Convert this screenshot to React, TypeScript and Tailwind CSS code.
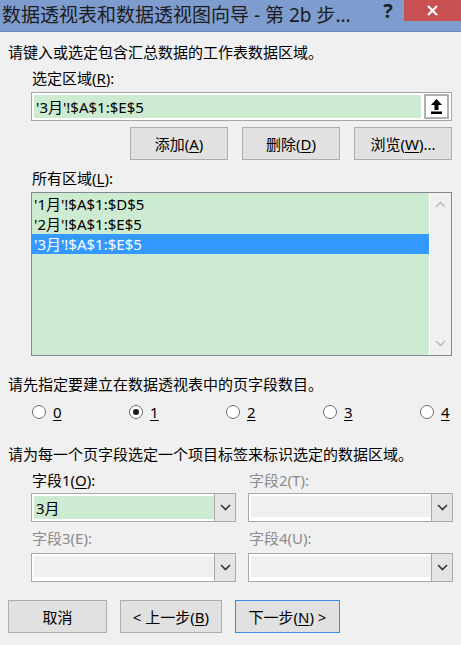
import React from 'react';

const font = "font-['Segoe_UI','Noto_Sans','Noto_Sans_CJK_SC',sans-serif]";

const Chevron = ({ color = '#333', up = false }: { color?: string; up?: boolean }) => (
  <svg width="11" height="7" viewBox="0 0 11 7">
    <path d={up ? 'M1 6 L5.5 1.5 L10 6' : 'M1 1 L5.5 5.5 L10 1'} fill="none" stroke={color} strokeWidth="1.6" />
  </svg>
);

const Btn = ({ children, w, primary = false }: { children: React.ReactNode; w: string; primary?: boolean }) => (
  <button
    className={`${w} h-[33px] flex items-center justify-center bg-[#e1e1e1] border text-[15px] leading-5 text-black ${
      primary ? 'border-[#3c8be6]' : 'border-[#adadad]'
    }`}
  >
    {children}
  </button>
);

const U = ({ children }: { children: React.ReactNode }) => <span className="underline underline-offset-2">{children}</span>;

const Combo = ({ value, active = false }: { value?: string; active?: boolean }) => (
  <div className="w-[205px] h-[29px] flex border border-[#a9a9a9] bg-white p-[2px]">
    <div className={`flex-1 flex items-center pl-[2px] text-[15px] ${active ? 'bg-[#cdebd0]' : 'bg-[#f0f0f0] border-b-2 border-white'}`}>
      {value}
    </div>
    <div className="w-[21px] -my-[2px] -mr-[2px] flex items-center justify-center bg-[#e5e5e5] border-l border-[#a9a9a9]">
      <Chevron />
    </div>
  </div>
);

const Radio = ({ label, checked = false, last = false }: { label: string; checked?: boolean; last?: boolean }) => (
  <div className={`${last ? '' : 'w-[97px]'} shrink-0 flex items-center gap-[7px]`}>
    <span className="w-[14px] h-[14px] rounded-full border border-[#6e6e6e] bg-white flex items-center justify-center">
      {checked && <span className="w-[6px] h-[6px] rounded-full bg-[#1a1a1a]" />}
    </span>
    <U>{label}</U>
  </div>
);

export default function App() {
  return (
    <div className={`w-[461px] h-[645px] overflow-hidden bg-[#f0f0f0] text-black ${font}`}>
      <div className="h-[32px] flex items-start bg-[#7f9ccf] border-b border-[#6d89bb]">
        <div className="flex-1 min-w-0 pl-[2px] pt-[3px] text-[19px] leading-6 text-[#1c1c1c] whitespace-nowrap">
          数据透视表和数据透视图向导 - 第 2b 步...
        </div>
        <div className="w-[32px] -mt-[2px] text-center text-[20px] leading-[26px] font-bold text-[#222]">?</div>
        <div className="w-[57px] h-[21px] bg-[#c75050] flex items-center justify-center">
          <svg width="11" height="11" viewBox="0 0 11 11">
            <path d="M1 1 L10 10 M10 1 L1 10" stroke="#fff" strokeWidth="2.2" />
          </svg>
        </div>
      </div>

      <div className="pl-[8px] pr-[9px] text-[15px] leading-5">
        <div className="mt-[10px]">请键入或选定包含汇总数据的工作表数据区域。</div>
        <div className="mt-[6px] ml-[24px]">
          选定区域(<U>R</U>):
        </div>
        <div className="mt-[4px] ml-[23px] h-[29px] flex border border-[#a5a5a5] bg-white p-[2px]">
          <div className="flex-1 flex items-center pl-[2px] bg-[#cdebd0]">'3月'!$A$1:$E$5</div>
          <div className="w-[25px] ml-[3px] -my-[1px] flex items-center justify-center bg-white border-2 border-[#b0b0b0]">
            <svg width="11" height="15" viewBox="0 0 11 15">
              <path d="M5.5 0 L11 6 L7.5 6 L7.5 11 L3.5 11 L3.5 6 L0 6 Z" fill="#000" />
              <rect x="0" y="12.5" width="11" height="2.5" fill="#000" />
            </svg>
          </div>
        </div>
        <div className="mt-[6px] flex justify-end gap-[14px]">
          <Btn w="w-[98px]">
            添加(<U>A</U>)
          </Btn>
          <Btn w="w-[98px]">
            删除(<U>D</U>)
          </Btn>
          <Btn w="w-[98px]">
            浏览(<U>W</U>)...
          </Btn>
        </div>
        <div className="mt-[8px] ml-[24px]">
          所有区域(<U>L</U>):
        </div>
        <div className="mt-[4px] ml-[23px] h-[164px] flex border border-[#828790] bg-white">
          <div className="flex-1 bg-[#cdebd0] pt-[1px]">
            <div className="h-[20px] flex items-center pl-[2px]">'1月'!$A$1:$D$5</div>
            <div className="h-[20px] flex items-center pl-[2px]">'2月'!$A$1:$E$5</div>
            <div className="h-[20px] flex items-center pl-[2px] bg-[#3399ff] text-white">'3月'!$A$1:$E$5</div>
          </div>
          <div className="w-[21px] ml-[1px] bg-[#f0f0f0] flex flex-col items-center justify-between py-[8px]">
            <Chevron color="#bdbdbd" up />
            <Chevron color="#bdbdbd" />
          </div>
        </div>

        <div className="mt-[18px]">请先指定要建立在数据透视表中的页字段数目。</div>
        <div className="mt-[8px] ml-[24px] flex">
          <Radio label="0" />
          <Radio label="1" checked />
          <Radio label="2" />
          <Radio label="3" />
          <Radio label="4" last />
        </div>

        <div className="mt-[22px]">请为每一个页字段选定一个项目标签来标识选定的数据区域。</div>
        <div className="ml-[23px] grid grid-cols-[205px_205px] gap-x-[12px]">
          <div className="mt-[6px] pl-[1px]">
            字段1(<U>O</U>):
          </div>
          <div className="mt-[6px] pl-[1px] text-[#8c8c8c]">字段2(T):</div>
          <div className="mt-[3px]">
            <Combo value="3月" active />
          </div>
          <div className="mt-[3px]">
            <Combo />
          </div>
          <div className="mt-[6px] pl-[1px] text-[#8c8c8c]">字段3(E):</div>
          <div className="mt-[6px] pl-[1px] text-[#8c8c8c]">字段4(U):</div>
          <div className="mt-[5px]">
            <Combo />
          </div>
          <div className="mt-[5px]">
            <Combo />
          </div>
        </div>

        <div className="mt-[18px] flex">
          <Btn w="w-[99px]">取消</Btn>
          <div className="ml-[13px]">
            <Btn w="w-[102px]">
              &lt; 上一步(<U>B</U>)
            </Btn>
          </div>
          <div className="ml-[13px]">
            <Btn w="w-[105px]" primary>
              下一步(<U>N</U>) &gt;
            </Btn>
          </div>
        </div>
      </div>
    </div>
  );
}
